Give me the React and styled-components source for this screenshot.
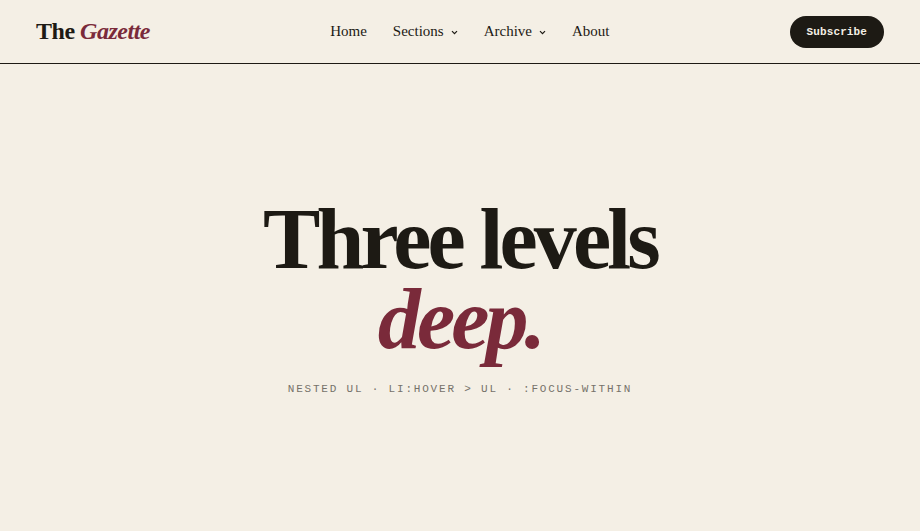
import React from "react";
import styled, { createGlobalStyle } from "styled-components";

const Global = createGlobalStyle`
  html, body { margin: 0; padding: 0; }
  body {
    background: #f4efe5;
    color: #1d1a14;
    font-family: "Liberation Serif", "Times New Roman", serif;
  }
  * { box-sizing: border-box; }
`;

const Page = styled.div`
  min-height: 100vh;
  display: flex;
  flex-direction: column;
`;

const Header = styled.header`
  height: 64px;
  display: flex;
  align-items: center;
  justify-content: space-between;
  padding: 0 36px;
  border-bottom: 1.5px solid #1d1a14;
  flex-shrink: 0;
`;

const Logo = styled.div`
  font-size: 24px;
  font-weight: 700;
  letter-spacing: -0.02em;
  color: #1d1a14;
  white-space: nowrap;
`;

const LogoAccent = styled.em`
  color: #7a2a3a;
  font-style: italic;
`;

const Nav = styled.ul`
  list-style: none;
  display: flex;
  align-items: center;
  gap: 26px;
  margin: 0;
  padding: 0;
`;

const NavItem = styled.li`
  font-size: 15px;
  color: #1d1a14;
  display: flex;
  align-items: center;
  gap: 7px;
  cursor: pointer;
`;

const Chevron = styled.svg`
  width: 7px;
  height: 5px;
  margin-top: 1px;
`;

const Subscribe = styled.button`
  background: #1d1a14;
  color: #f4efe5;
  border: none;
  border-radius: 999px;
  height: 32px;
  padding: 0 17px;
  font-family: "Liberation Mono", "Courier New", monospace;
  font-size: 11px;
  font-weight: 700;
  letter-spacing: 0.01em;
  cursor: pointer;
`;

const Main = styled.main`
  flex: 1;
  display: flex;
  flex-direction: column;
  align-items: center;
  justify-content: center;
  text-align: center;
`;

const Headline = styled.h1`
  margin: 0;
  font-size: 86px;
  font-weight: 700;
  line-height: 0.93;
  letter-spacing: -0.045em;
  color: #1d1a14;
`;

const Accent = styled.em`
  display: block;
  font-style: italic;
  color: #7a2a3a;
`;

const Caption = styled.p`
  margin: 24px 0 0;
  font-family: "Liberation Mono", "Courier New", monospace;
  font-size: 11px;
  letter-spacing: 1.8px;
  color: #76726a;
  text-transform: uppercase;
`;

const ChevronIcon = () => (
  <Chevron viewBox="0 0 7 5" fill="none">
    <path d="M1 1.2 L3.5 3.7 L6 1.2" stroke="#1d1a14" strokeWidth="1.2" />
  </Chevron>
);

export default function App() {
  return (
    <Page>
      <Global />
      <Header>
        <Logo>
          The <LogoAccent>Gazette</LogoAccent>
        </Logo>
        <Nav>
          <NavItem>Home</NavItem>
          <NavItem>
            Sections <ChevronIcon />
          </NavItem>
          <NavItem>
            Archive <ChevronIcon />
          </NavItem>
          <NavItem>About</NavItem>
        </Nav>
        <Subscribe>Subscribe</Subscribe>
      </Header>
      <Main>
        <Headline>
          Three levels
          <Accent>deep.</Accent>
        </Headline>
        <Caption>Nested ul · li:hover &gt; ul · :focus-within</Caption>
      </Main>
    </Page>
  );
}
